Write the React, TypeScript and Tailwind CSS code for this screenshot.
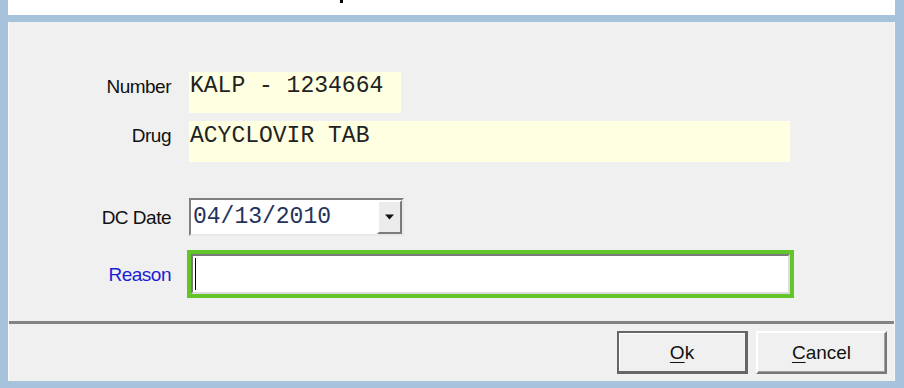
const label = "font-['Liberation_Sans',Arial,sans-serif] text-[19px] tracking-[-0.5px] leading-none";
const mono = "font-['Liberation_Mono','Courier_New',monospace] text-[23px] leading-[23px] whitespace-pre";

function Row({ name, blue, top, children }: { name: string; blue?: boolean; top?: boolean; children: React.ReactNode }) {
  return (
    <div className={`flex ${top ? "items-start" : "items-center"}`}>
      <div
        className={`w-[163px] shrink-0 pr-[1px] text-right ${top ? "pt-[5px]" : ""} ${label} ${
          blue ? "text-[#1c1cd8]" : "text-[#111]"
        }`}
      >
        {name}
      </div>
      <div className="ml-[17px] flex">{children}</div>
    </div>
  );
}

function Button({ text, isDefault }: { text: string; isDefault?: boolean }) {
  const first = text.slice(0, 1);
  const rest = text.slice(1);
  return (
    <div
      className={`flex h-[43px] w-[131px] items-center justify-center bg-[#f0f0f0] ${
        isDefault
          ? "border-2 border-b-[3px] border-r-[3px] border-[#666] shadow-[inset_1px_1px_0_#fff]"
          : "border-2 border-t-white border-l-white border-r-[#777] border-b-[#777] shadow-[inset_-1px_-1px_0_#a0a0a0]"
      }`}
    >
      <span className="font-['Liberation_Sans',Arial,sans-serif] text-[19px] leading-none text-[#111]">
        <span className="underline underline-offset-[3px]">{first}</span>
        {rest}
      </span>
    </div>
  );
}

export default function App() {
  return (
    <div className="flex h-[388px] w-[904px] flex-col bg-[#a7c3dc] pb-[7px] pl-[8px] pr-[9px]">
      <div className="relative h-[15px] shrink-0 bg-white">
        <div className="absolute left-[332px] top-0 h-[3px] w-[3px] bg-black" />
      </div>
      <div className="mt-[7px] flex flex-1 flex-col border-x border-[#fafafa] bg-[#f0f0f0]">
        <div className="flex h-[299px] flex-col pt-[50px]">
          <Row name="Number" top>
            <div className={`h-[41px] w-[212px] bg-[#ffffe1] pl-[1px] pt-[3px] text-[#222] ${mono}`}>KALP - 1234664</div>
          </Row>
          <div className="mt-[8px]">
            <Row name="Drug" top>
              <div className={`h-[41px] w-[601px] bg-[#ffffe1] pl-[1px] pt-[4px] text-[#222] ${mono}`}>ACYCLOVIR TAB</div>
            </Row>
          </div>
          <div className="mt-[36px]">
            <Row name="DC Date">
              <div className="flex h-[38px] w-[215px] items-center border-2 border-t-[#7f7f7f] border-l-[#7f7f7f] border-r-[#e8e8e8] border-b-[#e8e8e8] bg-white">
                <div className={`flex-1 pl-[2px] text-[#24325e] ${mono}`}>04/13/2010</div>
                <div className="flex h-[34px] w-[25px] items-center justify-center border-2 border-t-white border-l-white border-r-[#7a7a7a] border-b-[#7a7a7a] bg-[#ececec]">
                  <svg width="11" height="6" viewBox="0 0 11 6">
                    <path d="M1 0.5h9L5.5 5.5z" fill="#111" />
                  </svg>
                </div>
              </div>
            </Row>
          </div>
          <div className="mt-[14px]">
            <Row name="Reason" blue>
              <div className="-ml-[2px] h-[48px] w-[607px] border-[4px] border-[#62c62a]">
                <div className="flex h-full items-center border-2 border-t-[#7a7a7a] border-l-[#7a7a7a] border-r-[#dcdcdc] border-b-[#dcdcdc] bg-white pl-[2px]">
                  <div className="h-[32px] w-[1px] bg-black" />
                </div>
              </div>
            </Row>
          </div>
        </div>
        <div className="h-[3px] bg-[#838383]" />
        <div className="flex flex-1 justify-end gap-[8px] pr-[7px] pt-[7px]">
          <Button text="Ok" isDefault />
          <Button text="Cancel" />
        </div>
      </div>
    </div>
  );
}
